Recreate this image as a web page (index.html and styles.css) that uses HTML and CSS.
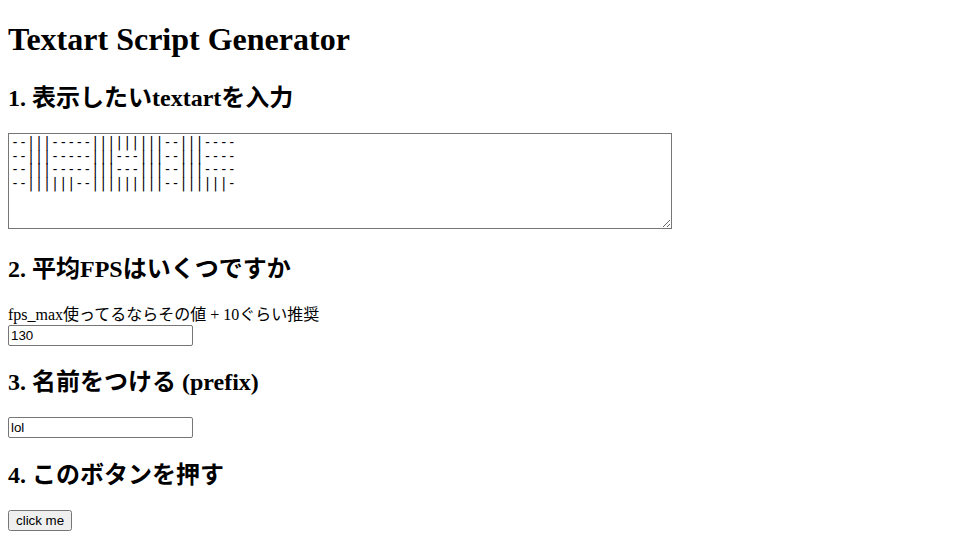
FILE: index.html
```html
<!DOCTYPE html>
<html lang="en">
   <head>
      <meta charset="UTF-8">
      <meta name="viewport" content="width=device-width, initial-scale=1.0">
      <title>Textart Script Generator</title>
      <link rel="stylesheet" href="styles.css">
   </head>
   <body>
      <h1 class="title">Textart Script Generator</h1>
      <h2 class="step">1. 表示したいtextartを入力</h2>
      <textarea class="art" id="art">--|||-----|||||||||--|||----
--|||-----|||---|||--|||----
--|||-----|||---|||--|||----
--||||||--|||||||||--||||||-</textarea>
      <h2 class="step">2. 平均FPSはいくつですか</h2>
      <div class="field">
         <div class="hint">fps_max使ってるならその値 + 10ぐらい推奨</div>
         <input type="text" id="fps" class="box" value="130">
      </div>
      <h2 class="step after-box">3. 名前をつける (prefix)</h2>
      <div class="field">
         <input type="text" id="prefix" class="box" value="lol">
      </div>
      <h2 class="step after-box last">4. このボタンを押す</h2>
      <button id="go" class="btn">click me</button>
   </body>
</html>
```

FILE: styles.css
```css
body { margin: 0; padding: 8px; font-family: "Liberation Serif", "Noto Sans CJK SC", serif; font-size: 16px; color: #000; }
.title { font-size: 32px; margin: 13px 0 17px; }
.step { font-size: 24px; margin: 20px 0; }
.step.after-box { margin-top: 16px; }
.step.last { margin-top: 17px; }
.art { display: block; box-sizing: border-box; width: 664px; height: 96px; margin: 0 0 2px; padding: 2px; font-family: "DejaVu Sans Mono", monospace; font-size: 13.33px; line-height: 13.5px; border: 1px solid #767676; resize: vertical; }
.hint { line-height: 21px; }
.box { display: block; box-sizing: border-box; width: 185px; height: 21px; margin: 0; padding: 1px 2px; font-family: "Liberation Sans", Arial, sans-serif; font-size: 13.33px; border: 1px solid #767676; border-radius: 2px; }
.btn { display: block; font-family: "Liberation Sans", Arial, sans-serif; font-size: 13.33px; padding: 1px 6px; margin: 0; }
```
